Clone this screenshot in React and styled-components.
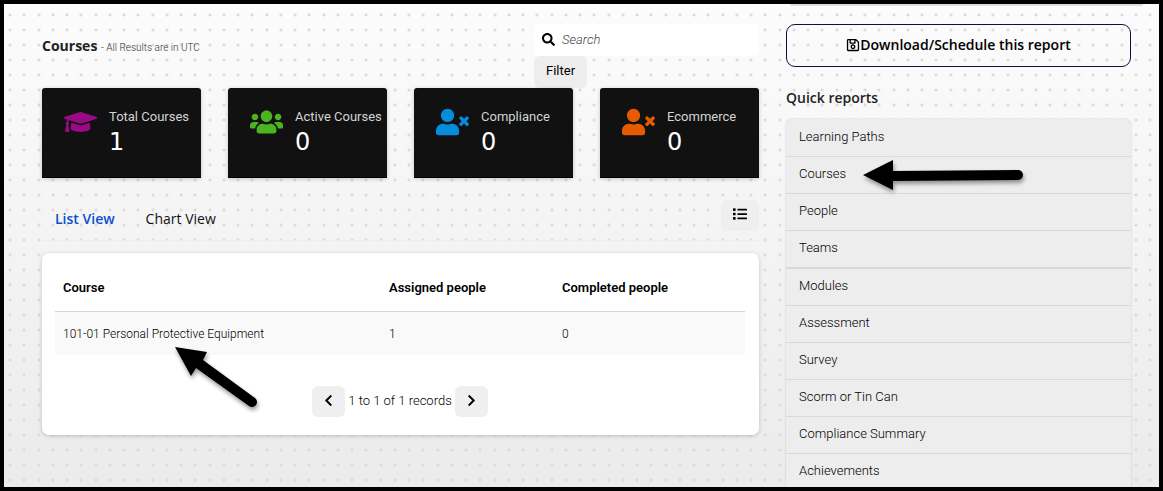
import React, { useState } from "react";
import styled, { createGlobalStyle } from "styled-components";
import {
  FaGraduationCap,
  FaUsers,
  FaUserTimes,
  FaSearch,
  FaRegSave,
  FaChevronLeft,
  FaChevronRight,
  FaList,
} from "react-icons/fa";

const tiles = [
  { label: "Total Courses", value: 1, color: "#9b0a85", icon: FaGraduationCap },
  { label: "Active Courses", value: 0, color: "#4bb51f", icon: FaUsers },
  { label: "Compliance", value: 0, color: "#058ddb", icon: FaUserTimes },
  { label: "Ecommerce", value: 0, color: "#e65a00", icon: FaUserTimes },
];

const courses = [
  { name: "101-01 Personal Protective Equipment", assigned: 1, completed: 0 },
];

const reports = [
  { name: "Learning Paths" },
  { name: "Courses", marked: true },
  { name: "People" },
  { name: "Teams", endsGroup: true },
  { name: "Modules" },
  { name: "Assessment" },
  { name: "Survey" },
  { name: "Scorm or Tin Can" },
  { name: "Compliance Summary" },
  { name: "Achievements" },
];

function App() {
  const [search, setSearch] = useState("");
  const [view, setView] = useState("list");

  return (
    <Page>
      <GlobalStyle />
      <Main>
        <Header>
          <Title>
            Courses <small>- All Results are in UTC</small>
          </Title>
          <Tools>
            <SearchBox>
              <FaSearch />
              <input
                type="search"
                aria-label="Search"
                placeholder="Search"
                value={search}
                onChange={(e) => setSearch(e.target.value)}
              />
            </SearchBox>
            <FilterButton type="button">Filter</FilterButton>
          </Tools>
        </Header>

        <Tiles>
          {tiles.map(({ label, value, color, icon: Icon }) => (
            <Tile key={label} $color={color}>
              <Icon />
              <div>
                <h2>{label}</h2>
                <p>{value}</p>
              </div>
            </Tile>
          ))}
        </Tiles>

        <ViewBar>
          <Tab type="button" $active={view === "list"} onClick={() => setView("list")}>
            List View
          </Tab>
          <Tab type="button" $active={view === "chart"} onClick={() => setView("chart")}>
            Chart View
          </Tab>
          <ColumnsButton type="button" aria-label="Columns">
            <FaList />
          </ColumnsButton>
        </ViewBar>

        <Card>
          <Table>
            <thead>
              <tr>
                <th>Course</th>
                <th>Assigned people</th>
                <th>Completed people</th>
              </tr>
            </thead>
            <tbody>
              {courses.map((course) => (
                <tr key={course.name}>
                  <td>
                    <Marked>
                      {course.name}
                      <RowArrow viewBox="0 0 90 66" aria-hidden="true">
                        <path d="M2 2 L34 7 L30 15 L82 53 A5 5 0 0 1 76 61 L23 23 L18 31 Z" />
                      </RowArrow>
                    </Marked>
                  </td>
                  <td>{course.assigned}</td>
                  <td>{course.completed}</td>
                </tr>
              ))}
            </tbody>
          </Table>
          <Pager>
            <button type="button" aria-label="Previous page">
              <FaChevronLeft />
            </button>
            <span>1 to 1 of 1 records</span>
            <button type="button" aria-label="Next page">
              <FaChevronRight />
            </button>
          </Pager>
        </Card>
      </Main>

      <Sidebar>
        <PanelEdge />
        <DownloadButton type="button">
          <FaRegSave />
          Download/Schedule this report
        </DownloadButton>
        <SideTitle>Quick reports</SideTitle>
        <ReportList>
          {reports.map((report) => (
            <ReportItem key={report.name} $endsGroup={report.endsGroup}>
              <a href="#">
                <Marked>
                  {report.name}
                  {report.marked && (
                    <LinkArrow viewBox="0 0 168 36" aria-hidden="true">
                      <path d="M2 17 L32 2 L32 13 L157 12 A5 5 0 0 1 157 22 L32 23 L32 32 Z" />
                    </LinkArrow>
                  )}
                </Marked>
              </a>
            </ReportItem>
          ))}
        </ReportList>
      </Sidebar>
    </Page>
  );
}

const dot = "radial-gradient(circle at 2px 2px, #dcdcdc 1px, transparent 2px)";

const GlobalStyle = createGlobalStyle`
  * {
    box-sizing: border-box;
  }

  body {
    margin: 0;
    font-family: Roboto, "Liberation Sans", sans-serif;
    font-size: 13px;
    font-weight: 300;
    color: #000;
  }

  button,
  input {
    font: inherit;
    color: inherit;
  }

  button {
    border: 0;
    padding: 0;
    cursor: pointer;
  }

  h1,
  h2,
  p,
  ul {
    margin: 0;
    padding: 0;
  }
`;

const Page = styled.div`
  display: grid;
  grid-template-columns: minmax(0, 1fr) 345px;
  gap: 27px;
  height: 100vh;
  overflow: hidden;
  padding: 0 28px 0 38px;
  border: 4px solid #000;
  background:
    ${dot} 4px 9px / 57px 15px,
    ${dot} 18px 9px / 57px 15px,
    ${dot} 33px 9px / 57px 15px,
    ${dot} 47px 9px / 57px 15px,
    linear-gradient(#fcfcfc, #ebebeb);
`;

const Main = styled.main`
  padding-top: 20px;
`;

const Header = styled.header`
  display: flex;
  justify-content: space-between;
`;

const Title = styled.h1`
  padding-top: 12px;
  font-family: "Open Sans", sans-serif;
  font-size: 14px;
  line-height: 20px;
  font-weight: 700;
  color: #222;

  small {
    font-family: Roboto, sans-serif;
    font-size: 10px;
    font-weight: 300;
    color: #333;
  }
`;

const Tools = styled.div`
  width: 225px;
`;

const SearchBox = styled.label`
  display: flex;
  align-items: center;
  gap: 7px;
  height: 32px;
  padding: 0 8px 2px;
  border-radius: 5px;
  background: #fff;

  svg {
    flex: none;
    font-size: 13px;
  }

  input {
    min-width: 0;
    flex: 1;
    padding: 0;
    border: 0;
    outline: 0;
    background: none;
  }

  input::placeholder {
    font-style: italic;
    color: #444;
  }
`;

const FilterButton = styled.button`
  display: block;
  height: 32px;
  padding: 0 12px 3px;
  border-radius: 6px;
  background: #ededed;
  font-weight: 400;
`;

const Tiles = styled.section`
  display: grid;
  grid-template-columns: repeat(4, minmax(0, 1fr));
  gap: 27px;
`;

const Tile = styled.article`
  display: flex;
  gap: 12px;
  height: 90px;
  padding: 20px 0 0 22px;
  border-bottom: 1px solid #000;
  border-radius: 3px 3px 0 0;
  background: #111;
  box-shadow: 0 1px 4px rgba(0, 0, 0, 0.2);
  white-space: nowrap;

  svg {
    flex: none;
    width: 33px;
    height: 28px;
    color: ${(props) => props.$color};
  }

  h2 {
    font-size: 13px;
    line-height: 18px;
    font-weight: 400;
    color: #d4d4d4;
  }

  p {
    font-family: "DejaVu Sans", sans-serif;
    font-size: 24px;
    line-height: 32px;
    font-weight: 400;
    color: #fff;
  }
`;

const ViewBar = styled.nav`
  display: flex;
  align-items: center;
  gap: 31px;
  height: 63px;
  padding: 0 0 0 13px;
  margin-bottom: 12px;
  border-bottom: 1px solid #eee;
`;

const Tab = styled.button`
  margin-top: 20px;
  background: none;
  font-family: "Open Sans", sans-serif;
  font-size: 14px;
  line-height: 20px;
  font-weight: ${(props) => (props.$active ? 600 : 400)};
  color: ${(props) => (props.$active ? "#0b4fce" : "#111")};
`;

const ColumnsButton = styled.button`
  display: grid;
  place-items: center;
  width: 38px;
  height: 31px;
  padding-bottom: 2px;
  margin: 12px 0 0 auto;
  border-radius: 6px;
  background: #efefef;
  font-size: 14px;
`;

const Card = styled.section`
  padding: 13px 14px 18px 13px;
  border-radius: 7px;
  background: #fff;
  box-shadow: 0 1px 4px rgba(0, 0, 0, 0.2);
`;

const Table = styled.table`
  width: 100%;
  border-collapse: collapse;
  table-layout: fixed;

  th,
  td {
    padding: 0 8px;
    text-align: left;
  }

  th {
    height: 45px;
    padding-bottom: 2px;
    border-bottom: 1px solid #d8d8d8;
    font-weight: 600;
  }

  th:nth-child(2) {
    width: 173px;
  }

  th:last-child {
    width: 191px;
  }

  td {
    height: 44px;
    padding-top: 2px;
    background: #f9f9f9;
    font-size: 12px;
  }
`;

const Marked = styled.span`
  position: relative;
`;

const Arrow = styled.svg`
  position: absolute;
  fill: #000;
  filter: drop-shadow(1px 3px 2px rgba(0, 0, 0, 0.4));
  pointer-events: none;
`;

const RowArrow = styled(Arrow)`
  left: 110px;
  top: 18px;
  width: 90px;
  height: 66px;
`;

const LinkArrow = styled(Arrow)`
  left: 62px;
  top: -8px;
  width: 168px;
  height: 36px;
`;

const Pager = styled.div`
  display: flex;
  justify-content: center;
  align-items: center;
  gap: 3px;
  margin-top: 31px;

  button {
    display: grid;
    place-items: center;
    width: 33px;
    height: 31px;
    padding-bottom: 2px;
    border-radius: 6px;
    background: #efefef;
  }

  span {
    padding-bottom: 2px;
  }
`;

const Sidebar = styled.aside`
  min-width: 0;
`;

const PanelEdge = styled.div`
  height: 2px;
  margin: 0 -12px 18px 4px;
  border-radius: 0 0 4px 4px;
  background: #dcdcdc;
`;

const DownloadButton = styled.button`
  display: flex;
  align-items: center;
  justify-content: center;
  width: 100%;
  height: 43px;
  padding-bottom: 2px;
  border: 1px solid #0b1040;
  border-radius: 9px;
  background: none;
  font-family: "Open Sans", sans-serif;
  font-size: 14px;
  font-weight: 600;
`;

const SideTitle = styled.h2`
  margin: 21px 0 11px;
  font-family: "Open Sans", sans-serif;
  font-size: 14px;
  line-height: 20px;
  font-weight: 600;
  color: #222;
`;

const ReportList = styled.ul`
  list-style: none;
  border-radius: 6px 6px 0 0;
  background: #ededed;
  box-shadow: 0 0 2px rgba(0, 0, 0, 0.2);
`;

const ReportItem = styled.li`
  border-bottom: ${(props) => (props.$endsGroup ? 2 : 1)}px solid #d9d9d9;

  &:first-child {
    padding-top: 1px;
  }

  a {
    display: block;
    padding: 7px 13px 9px;
    line-height: 20px;
    color: inherit;
    text-decoration: none;
  }
`;

export default App;
